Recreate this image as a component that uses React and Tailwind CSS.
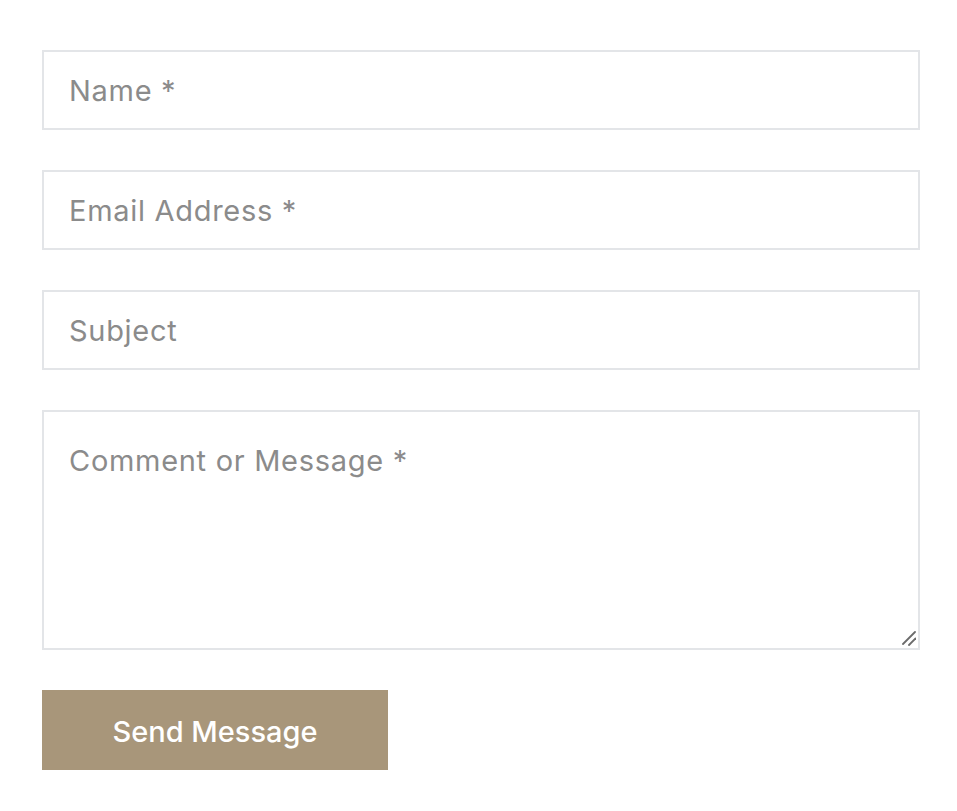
import React from "react";

const fieldClass =
  "block w-full h-[80px] border-2 border-[#e3e5e8] bg-white px-[25px] text-[29px] tracking-[0.7px] text-[#333] placeholder:text-[#8b8b8b] outline-none";

const App = () => {
  return (
    <div className="min-h-screen bg-white pt-[50px] px-[42px] font-['Inter',_'Liberation_Sans',_sans-serif]">
      {/* ======================= CONTACT FORM ======================= */}
      <form className="w-[878px] flex flex-col gap-[40px]" onSubmit={(e) => e.preventDefault()}>
        <input type="text" placeholder="Name *" className={fieldClass} />
        <input type="email" placeholder="Email Address *" className={fieldClass} />
        <input type="text" placeholder="Subject" className={fieldClass} />
        <div className="relative">
          <textarea
            placeholder="Comment or Message *"
            className="block w-full h-[240px] border-2 border-[#e3e5e8] bg-white px-[25px] pt-[28px] text-[29px] tracking-[0.7px] leading-[42px] text-[#333] placeholder:text-[#8b8b8b] outline-none resize-none"
          />
          {/* resize grip */}
          <svg
            className="absolute right-[4px] bottom-[4px] pointer-events-none"
            width="16"
            height="16"
            viewBox="0 0 16 16"
          >
            <line x1="3" y1="14" x2="15" y2="2" stroke="#6b6b6b" strokeWidth="1.8" strokeLinecap="round" />
            <line x1="9" y1="15" x2="15.5" y2="8.5" stroke="#6b6b6b" strokeWidth="1.8" strokeLinecap="round" />
          </svg>
        </div>
        <div>
          <button
            type="submit"
            className="w-[346px] h-[80px] pt-[3px] bg-[#a8967a] text-white text-[29px] font-medium"
          >
            Send Message
          </button>
        </div>
      </form>
    </div>
  );
};

export default App;
